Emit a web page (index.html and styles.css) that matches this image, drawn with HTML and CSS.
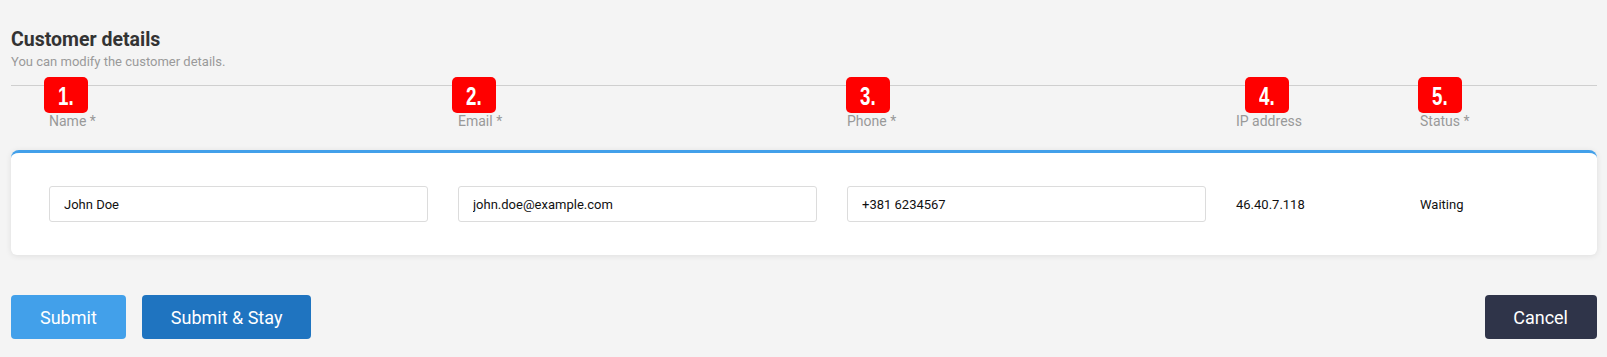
FILE: index.html
```html
<!DOCTYPE html>
<html lang="en">
<head>
<meta charset="utf-8">
<title>Customer details</title>
<link rel="stylesheet" href="styles.css">
</head>
<body>
<div class="page">
  <header class="section-head">
    <h1 class="title">Customer details</h1>
    <p class="subtitle">You can modify the customer details.</p>
  </header>
  <hr class="divider">
  <div class="grid labels">
    <div class="label">Name *</div>
    <div class="label">Email *</div>
    <div class="label">Phone *</div>
    <div class="label">IP address</div>
    <div class="label">Status *</div>
  </div>
  <div class="card">
    <div class="grid row">
      <input class="field" type="text" value="John Doe">
      <input class="field" type="text" value="john.doe@example.com">
      <input class="field" type="text" value="+381 6234567">
      <div class="value">46.40.7.118</div>
      <div class="value">Waiting</div>
    </div>
  </div>
  <div class="actions">
    <div class="actions-left">
      <button class="btn btn-primary">Submit</button>
      <button class="btn btn-dark-blue">Submit &amp; Stay</button>
    </div>
    <button class="btn btn-cancel">Cancel</button>
  </div>

  <span class="badge badge-1"><span class="badge-text">1.</span></span>
  <span class="badge badge-2"><span class="badge-text">2.</span></span>
  <span class="badge badge-3"><span class="badge-text">3.</span></span>
  <span class="badge badge-4"><span class="badge-text">4.</span></span>
  <span class="badge badge-5"><span class="badge-text">5.</span></span>
</div>
</body>
</html>
```
FILE: styles.css
```css
* { box-sizing: border-box; }

html, body {
  margin: 0;
  padding: 0;
  background: #f4f4f4;
  font-family: Roboto, "Liberation Sans", sans-serif;
}

.page {
  position: relative;
  padding: 28px 10px 0 11px;
  width: 1607px;
}

.title {
  margin: 0;
  font-size: 19.5px;
  line-height: 24px;
  font-weight: 700;
  color: #333;
}

.subtitle {
  margin: 2px 0 0;
  font-size: 13px;
  line-height: 15px;
  color: #9a9a9a;
}

.divider {
  margin: 16px 0 0;
  border: 0;
  border-top: 1px solid #cfcfcf;
  height: 0;
}

.grid {
  display: grid;
  grid-template-columns: 379px 359px 359px 154px 1fr;
  column-gap: 30px;
  align-items: center;
}

.labels {
  margin-top: 27px;
  padding: 0 38px;
}

.label {
  font-size: 14px;
  line-height: 16px;
  color: #999;
}

.card {
  margin-top: 21px;
  background: #fff;
  border-top: 3px solid #42a0ea;
  border-radius: 8px 8px 6px 6px;
  box-shadow: 0 1px 6px rgba(0, 0, 0, 0.09);
  padding: 33px 38px;
}

.field {
  height: 36px;
  width: 100%;
  border: 1px solid #dcdcdc;
  border-radius: 3px;
  padding: 0 14px;
  font-family: Roboto, "Liberation Sans", sans-serif;
  font-size: 13px;
  color: #111;
  background: #fff;
  outline: none;
}

.value {
  font-size: 13px;
  color: #111;
}

.actions {
  margin-top: 40px;
  display: flex;
  justify-content: space-between;
}

.actions-left {
  display: flex;
  gap: 16px;
}

.btn {
  height: 44px;
  border: 0;
  border-radius: 4px;
  padding: 0 29px;
  font-family: Roboto, "Liberation Sans", sans-serif;
  font-size: 18px;
  color: #fff;
  cursor: pointer;
}

.btn-primary { background: #42a0ea; }
.btn-dark-blue { background: #1f74c0; }
.btn-cancel { background: #2f3449; padding: 0 29px 0 28px; }

.badge {
  position: absolute;
  top: 77px;
  width: 44px;
  height: 36px;
  border-radius: 5px;
  background: #ff0000;
  display: flex;
  align-items: center;
  justify-content: center;
}

.badge-text {
  display: inline-block;
  color: #fff;
  font-family: "Liberation Sans", sans-serif;
  font-weight: 700;
  font-size: 26px;
  line-height: 1;
  transform: scaleX(0.72);
  margin-top: 1px;
}

.badge-1 { left: 44px; }
.badge-2 { left: 452px; }
.badge-3 { left: 846px; }
.badge-4 { left: 1245px; }
.badge-5 { left: 1418px; }
```
